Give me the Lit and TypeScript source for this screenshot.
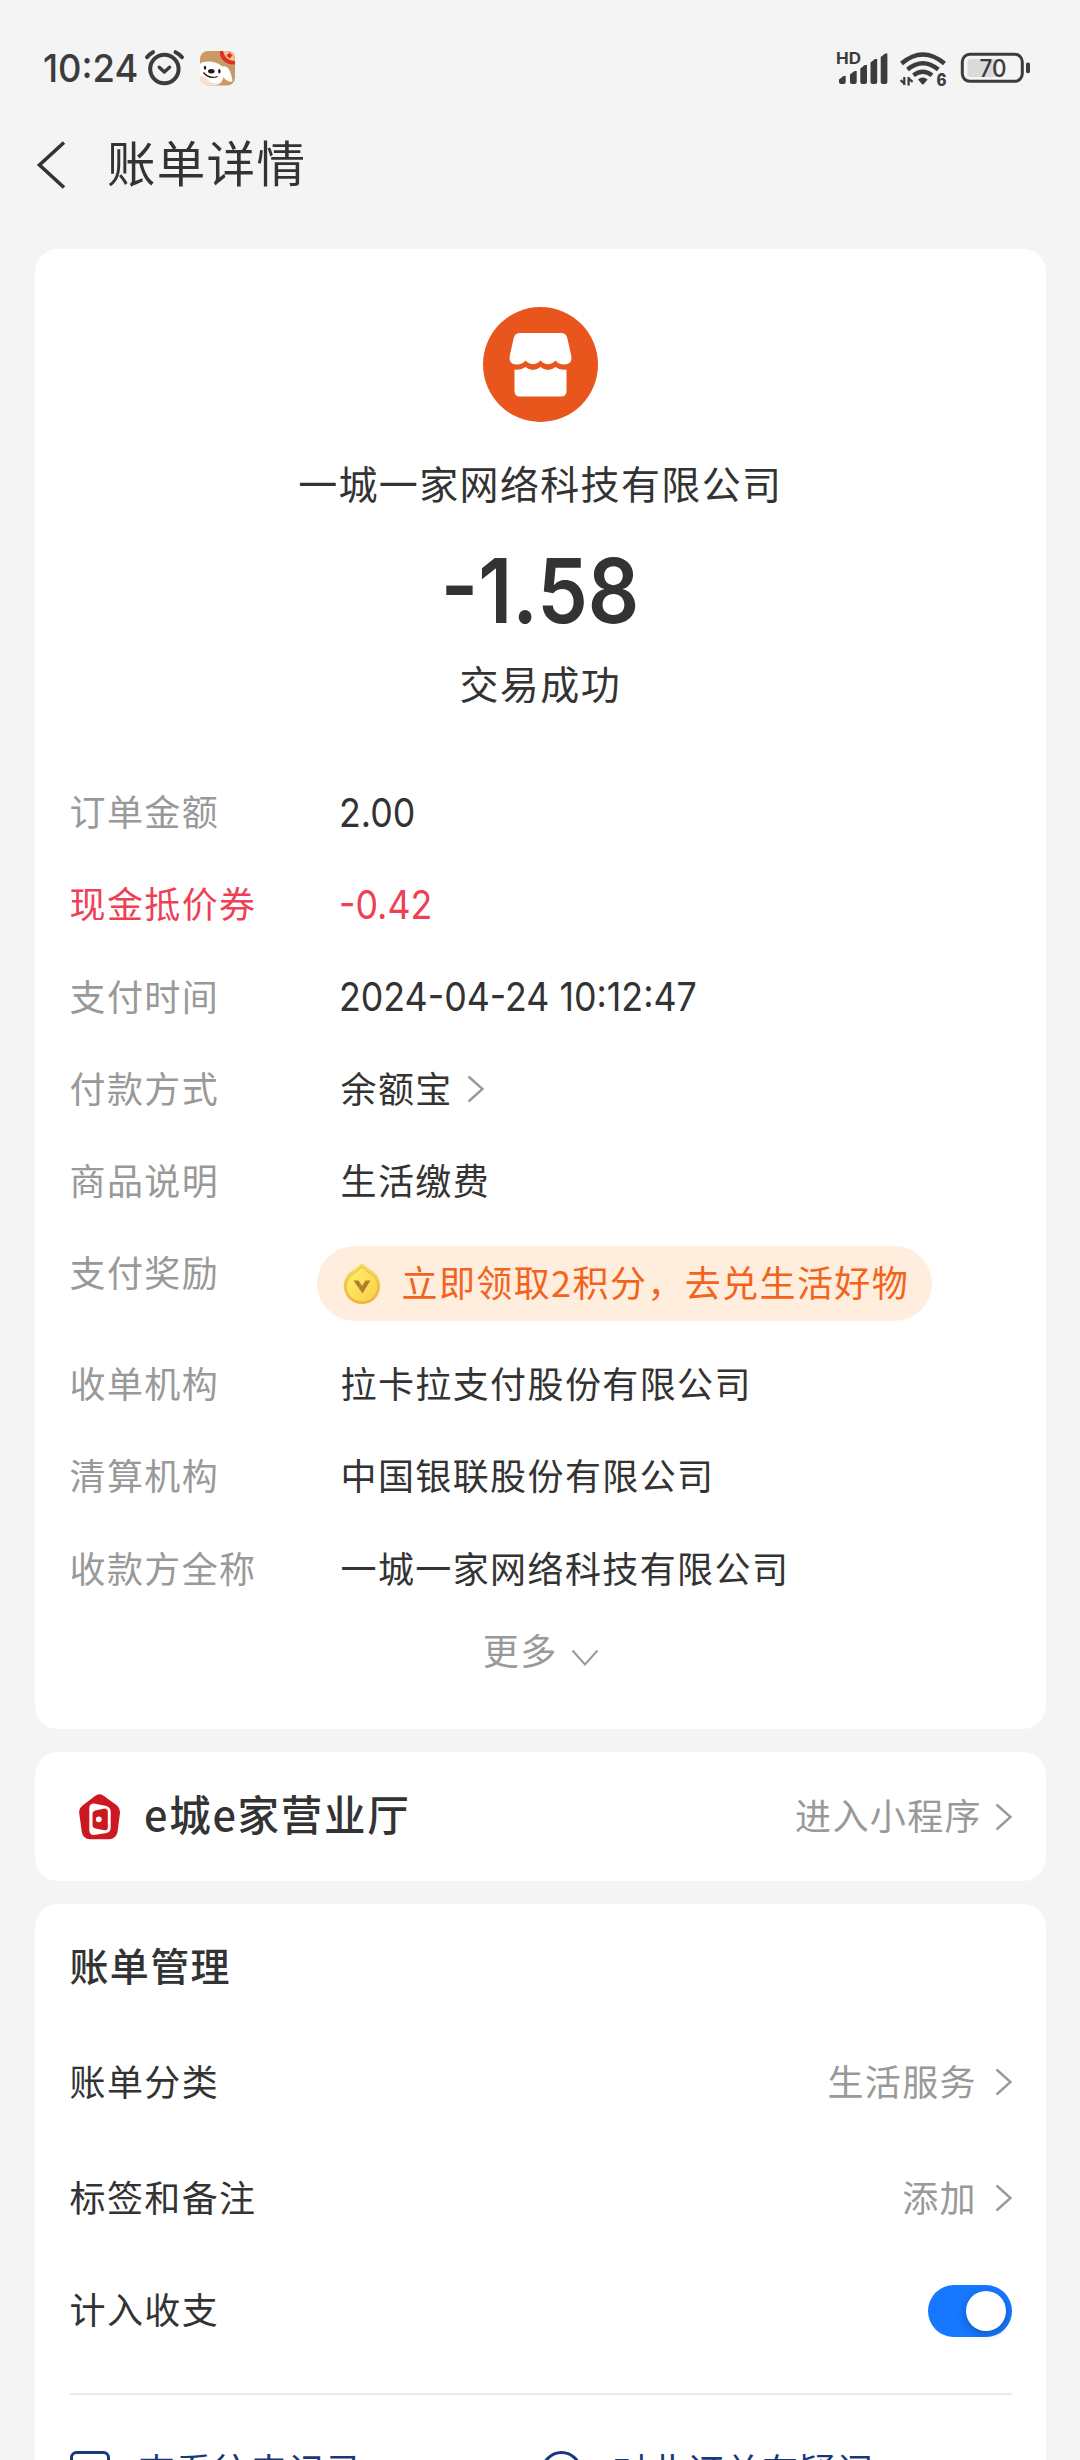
import { LitElement, html, css, svg, nothing } from "lit";
import { customElement, property } from "lit/decorators.js";

interface Detail {
  label: string;
  value: string;
  kind?: "number" | "link" | "reward";
  accent?: boolean;
}

const DETAILS: Detail[] = [
  { label: "订单金额", value: "2.00", kind: "number" },
  { label: "现金抵价券", value: "-0.42", kind: "number", accent: true },
  { label: "支付时间", value: "2024-04-24 10:12:47", kind: "number" },
  { label: "付款方式", value: "余额宝", kind: "link" },
  { label: "商品说明", value: "生活缴费" },
  { label: "支付奖励", value: "立即领取2积分，去兑生活好物", kind: "reward" },
  { label: "收单机构", value: "拉卡拉支付股份有限公司" },
  { label: "清算机构", value: "中国银联股份有限公司" },
  { label: "收款方全称", value: "一城一家网络科技有限公司" },
];

const chevron = html`<svg class="chev" width="18" height="28" viewBox="0 0 18 28">
  <path d="M1.5 1.5 L15.5 14 L1.5 26.5" fill="none" stroke="#999" stroke-width="2.4" />
</svg>`;

@customElement("status-bar")
class StatusBar extends LitElement {
  static styles = css`
    :host { display: flex; align-items: flex-start; height: 108px; box-sizing: border-box; padding: 46px 48px 0 43px; letter-spacing: 0; }
    .time { font: 500 38.5px/44px Inter, sans-serif; color: #3c3c3c; width: 101px; white-space: nowrap; transform: scaleX(.945); transform-origin: left; }
    .dog { margin: 5px 0 0 14px; }
    .alarm { margin-top: 2px; }
    .right { margin-left: auto; display: block; }
    .hd { font: 700 16px Inter, sans-serif; }
    .six { font: 800 17px Inter, sans-serif; }
    .pct { font: 500 24.5px Inter, sans-serif; }
  `;
  render() {
    const bars = [
      [39, 76], [50, 71], [60.3, 65], [70.5, 59], [80.7, 53.5],
    ];
    return html`
      <div class="time">10:24</div>
      <svg class="alarm" width="42" height="38" viewBox="0 0 42 38">
        <g fill="none" stroke="#3c3c3c" stroke-linecap="round" stroke-linejoin="round">
          <circle cx="20.4" cy="21" r="14.2" stroke-width="4" />
          <path d="M15.2 19.2 L20.3 24 L25.6 19.2" stroke-width="3.4" />
          <path d="M3 9.2 Q5.5 6 9 4.2 M31.500 4.2 Q35.500 6 38 9.2" stroke-width="4" />
        </g>
      </svg>
      <svg class="dog" width="35" height="35" viewBox="0 0 35 35">
        <defs><clipPath id="dogclip"><rect width="35" height="34.500" rx="8" /></clipPath></defs>
        <g clip-path="url(#dogclip)">
          <rect width="35" height="35" fill="#c99a65" />
          <path d="M0 13 C4 9 17 10 22 15.500 C28 14 31 20 32.500 30 C30 32 25 29 23.500 26 C22 33 18 34.500 9 34.500 L0 35Z" fill="#fff" />
          <path d="M0 25 Q7 25 10 31 Q14 33 20 31 L17 33.500 L0 35Z" fill="#f9e0d2" />
          <path d="M20 0 H35 V13.500 Q23 14 20 4Z" fill="#dd3322" />
          <path d="M23 0 H35 V9.500 Q26 11 23 0Z" fill="#f7c08e" />
          <path d="M29.500 1.500 L32.500 4.500 L29.500 7.500 L26.500 4.500Z" fill="#d8321d" />
          <ellipse cx="11.300" cy="20.300" rx="3.200" ry="2.200" fill="#1d1a18" />
          <ellipse cx="5" cy="16.800" rx="1.200" ry="2" fill="#1d1a18" />
          <ellipse cx="19.300" cy="20.300" rx="1.200" ry="2.300" fill="#1d1a18" />
          <path d="M3.500 21.500 Q9 28.500 17.500 25.500" fill="none" stroke="#1d1a18" stroke-width="1.300" />
        </g>
      </svg>
      <svg class="right" width="197" height="44" viewBox="35 46 197 44">
        <g fill="#3c3c3c">
          <text class="hd" x="36" y="63.800" textLength="25" lengthAdjust="spacingAndGlyphs">HD</text>
          ${bars.map(([x, y]) => svg`<path d=${`M${x} 82 V${y + 3.5} L${x + 4.5} ${y} H${x + 6.7} V82 Q${x + 6.7} 84 ${x + 4.7} 84 H${x + 2} Q${x} 84 ${x} 82Z`} />`)}
          <path d="M118 79.600 Q122.800 75.600 127.600 79.600 L124 83.800 Q122.800 85 121.600 83.800Z" />
          <text class="six" x="136.500" y="85.500" textLength="10" lengthAdjust="spacingAndGlyphs">6</text>
          <path d="M104.300 77 V85 M104.800 84 L100.600 80.200 M108.600 85.500 V77 M108.200 78 L112.600 81.800" fill="none" stroke="#3c3c3c" stroke-width="2.300" />
        </g>
        <g fill="none" stroke="#3c3c3c" stroke-width="4.400">
          <path d="M101.500 63.500 Q122.800 45.500 144.500 63.500" />
          <path d="M107.500 69.500 Q122.800 57 138.300 69.500" />
          <path d="M113.500 75.300 Q122.800 68.300 132 75.300" />
        </g>
        <rect x="162.300" y="54.300" width="60" height="27" rx="7.500" fill="none" stroke="#3c3c3c" stroke-width="3" />
        <rect x="167.500" y="59" width="29.500" height="18" rx="3" fill="#dadada" />
        <rect x="226" y="62.500" width="4" height="10.700" rx="1.800" fill="#3c3c3c" />
        <text class="pct" x="179.500" y="76.800" textLength="27" lengthAdjust="spacingAndGlyphs" fill="#3c3c3c">70</text>
      </svg>
    `;
  }
}

@customElement("detail-row")
class DetailRow extends LitElement {
  @property({ attribute: false }) item!: Detail;
  static styles = css`
    :host { display: block; }
    .row { display: flex; height: 92.3px; line-height: 92.3px; white-space: nowrap; }
    .row.reward { height: 110.5px; }
    .label { width: 271px; color: #999; flex: none; }
    .value { display: flex; align-items: center; color: #333; height: 92.3px; }
    .accent .label, .accent .value { color: #ee3f55; }
    .digits { font-family: Inter, sans-serif; font-size: 39.5px; letter-spacing: 0; display: block; transform: scaleX(.905); transform-origin: left; margin: 5px 0 0 -2px; }
    .chev { margin: 4px 0 0 14px; }
    .pill { display: flex; align-items: center; height: 75px; line-height: 69px; margin: 21px 0 0 -24px; width: 615px; box-sizing: border-box; padding-left: 26px; border-radius: 38px; background: #ffeede; color: #f2641c; }
    .pill-text { margin-top: -4px; }
    .coin { margin-right: 21px; flex: none; }
  `;
  render() {
    const { label, value, kind, accent } = this.item;
    return html`<div class="row ${kind ?? ""} ${accent ? "accent" : ""}">
      <span class="label">${label}</span>
      ${kind === "reward"
        ? html`<span class="pill">
            <svg class="coin" width="38" height="42" viewBox="0 0 38 42">
              <defs>
                <linearGradient id="rim" x1="0" y1="0" x2="0" y2="1">
                  <stop offset="0" stop-color="#f6e060" /><stop offset="1" stop-color="#ecb446" />
                </linearGradient>
                <linearGradient id="face" x1="0" y1="0" x2="1" y2="1">
                  <stop offset="0" stop-color="#fff06c" /><stop offset="1" stop-color="#fbcf48" />
                </linearGradient>
              </defs>
              <path d="M17 1.500 Q19 0 21 1.500 Q25 5.500 31.500 9.500 A18.300 18.300 0 1 1 6.500 9.500 Q13 5.500 17 1.500Z" fill="url(#rim)" />
              <path d="M19 4 Q23 8 29 11.800 A15.800 15.300 0 1 1 9 11.800 Q15 8 19 4Z" fill="url(#face)" stroke="#e0b23a" stroke-width="0.800" />
              <path d="M10.500 17.500 H15.500 L19 23 L22.500 17.500 H27.500 L19.500 30.500Z" fill="#ad8029" />
            </svg><span class="pill-text">${value}</span></span>`
        : html`<span class="value">${kind === "number" ? html`<span class="digits">${value}</span>` : value}${kind === "link" ? chevron : nothing}</span>`}
    </div>`;
  }
}

@customElement("app-root")
class AppRoot extends LitElement {
  static styles = css`
    :host {
      display: block; width: 1080px; height: 2460px; overflow: hidden; background: #f4f4f4; color: #333;
      font-family: "Noto Sans CJK SC", sans-serif; font-size: 36px; letter-spacing: 1.4px;
    }
    .nav { display: flex; align-items: center; height: 106px; padding-left: 36px; }
    .nav h1 { margin: -1px 0 0 41px; font-size: 48.5px; letter-spacing: 1.3px; font-weight: 400; line-height: 106px; }
    .back { display: block; margin-top: 8px; }
    .stack { display: flex; flex-direction: column; gap: 23px; padding: 35px 34px 0 35px; }
    .card { background: #fff; border-radius: 23px; box-sizing: border-box; flex: none; }
    .bill { height: 1480px; padding: 58px 35px 0 34.5px; display: flex; flex-direction: column; }
    .summary { display: flex; flex-direction: column; align-items: center; height: 457px; white-space: nowrap; }
    .shop { display: block; }
    .merchant { font-size: 39px; letter-spacing: 1.35px; line-height: 56px; margin-top: 32px; }
    .amount { font: 600 90px/100px Inter, sans-serif; letter-spacing: 0; margin-top: 31px; transform: scaleX(.895); }
    .state { font-size: 39px; line-height: 56px; margin-top: 13px; }
    .more { display: flex; justify-content: center; align-items: center; color: #999; line-height: 60px; margin-top: 6px; padding-left: 1px; }
    .down { margin: 18px 0 0 13px; }
    .mini { height: 129px; padding: 0 33px 0 43px; display: flex; align-items: center; }
    .mini .name { font-size: 41.5px; font-weight: 500; letter-spacing: 1.7px; margin-left: 23px; line-height: 60px; margin-top: -8px; }
    .side { margin-left: auto; display: flex; align-items: center; color: #999; }
    .side span { margin-top: -5px; }
    .side .chev { margin-left: 18px; }
    .mini .side .chev { margin-left: 13px; }
    .manage { height: 620px; padding: 0 33px 0 34.5px; }
    .manage h2 { margin: 0; font-size: 39px; letter-spacing: 1.35px; font-weight: 500; line-height: 60px; padding-top: 30px; }
    .line { display: flex; align-items: center; height: 116px; }
    .line:nth-of-type(1) { margin-top: 30px; }
    .line .key { margin-top: -4px; }
    .line.last { height: 108px; }
    .toggle { margin: 2px 1px 0 auto; width: 84px; height: 52px; border-radius: 26px; background: #1677ff; box-sizing: border-box; padding: 6px; display: flex; justify-content: flex-end; }
    .knob { width: 40px; height: 40px; border-radius: 50%; background: #fff; box-shadow: 0 3px 8px rgba(0,0,0,.25); }
    .rule { height: 2px; background: #ebebeb; margin: 29px 1px 0 0; }
    .links { display: flex; color: #17397c; padding-top: 44px; line-height: 60px; }
    .link { display: flex; align-items: center; width: 474px; flex: none; white-space: nowrap; }
    .link svg { margin: 8px 29px 0 0; }
  `;
  render() {
    return html`
      <status-bar></status-bar>
      <header class="nav">
        <svg class="back" width="30" height="50" viewBox="0 0 30 50">
          <path d="M28 2.500 L3.500 25 L28 47.500" fill="none" stroke="#333" stroke-width="3.600" />
        </svg>
        <h1>账单详情</h1>
      </header>
      <main class="stack">
        <section class="card bill">
          <div class="summary">
            <svg class="shop" width="115" height="115" viewBox="0 0 115 115">
              <circle cx="57.500" cy="57.500" r="57.500" fill="#e8551d" />
              <path d="M37 26 H78 Q83 26 84.300 31 L88.300 49 Q89.500 57 82 57.500 Q76 58 72.500 53.500 Q65 61 57.500 53.500 Q50 61 42.500 53.500 Q39 58 33 57.500 Q25.500 57 26.700 49 L30.700 31 Q32 26 37 26Z" fill="#fff" />
              <path d="M31.500 62.500 Q38 63.500 42.500 60 Q50 66 57.500 60 Q65 66 72.500 60 Q77 63.500 83.500 62.500 V84 Q83.500 89.500 78 89.500 H37 Q31.500 89.500 31.500 84Z" fill="#fff" />
            </svg>
            <div class="merchant">一城一家网络科技有限公司</div>
            <div class="amount">-1.58</div>
            <div class="state">交易成功</div>
          </div>
          ${DETAILS.map((d) => html`<detail-row .item=${d}></detail-row>`)}
          <div class="more">更多<svg class="down" width="28" height="18" viewBox="0 0 28 18">
            <path d="M1.500 1.500 L14 15.500 L26.500 1.500" fill="none" stroke="#999" stroke-width="2" /></svg></div>
        </section>
        <section class="card mini">
          <svg width="43" height="46" viewBox="0 0 43 46">
            <path d="M17 2 Q21.500 -1.500 26 2 L39 11.500 Q42.500 14.500 42 19 L39.500 38 Q38 45 31 45.300 H12 Q5 45 3.800 38 L1.200 19 Q0.800 14.500 4.500 11.500Z" fill="#cc1820" />
            <path d="M16 9.500 L28.500 12 Q32.700 13.500 32.700 18 V34 Q32.700 38 28.500 39 L16 41 Q11.300 41 11.300 36 V14 Q11.300 9.500 16 9.500Z" fill="#fff" />
            <path d="M17.500 16.500 L26.500 14.500 Q29.800 14.500 29.800 18 V33 Q29.800 36.500 26.500 36.200 L17.500 34.500 Q14.500 33.500 14.500 31 V20 Q14.500 17.500 17.500 16.500Z" fill="#cc1820" />
            <circle cx="20.800" cy="25.300" r="2.900" fill="#fff" />
          </svg>
          <span class="name">e城e家营业厅</span>
          <div class="side"><span>进入小程序</span>${chevron}</div>
        </section>
        <section class="card manage">
          <h2>账单管理</h2>
          <div class="line"><span class="key">账单分类</span><div class="side"><span>生活服务</span>${chevron}</div></div>
          <div class="line"><span class="key">标签和备注</span><div class="side"><span>添加</span>${chevron}</div></div>
          <div class="line last"><span class="key">计入收支</span><div class="toggle"><div class="knob"></div></div></div>
          <div class="rule"></div>
          <div class="links">
            <div class="link"><svg width="40" height="44" viewBox="0 0 40 44"><rect x="1.500" y="1.500" width="37" height="40" rx="5" fill="none" stroke="#17397c" stroke-width="3" /></svg>查看往来记录</div>
            <div class="link"><svg width="40" height="44" viewBox="0 0 40 44"><circle cx="17.500" cy="20.500" r="19" fill="none" stroke="#17397c" stroke-width="3" /></svg>对此订单有疑问</div>
          </div>
        </section>
      </main>
    `;
  }
}
